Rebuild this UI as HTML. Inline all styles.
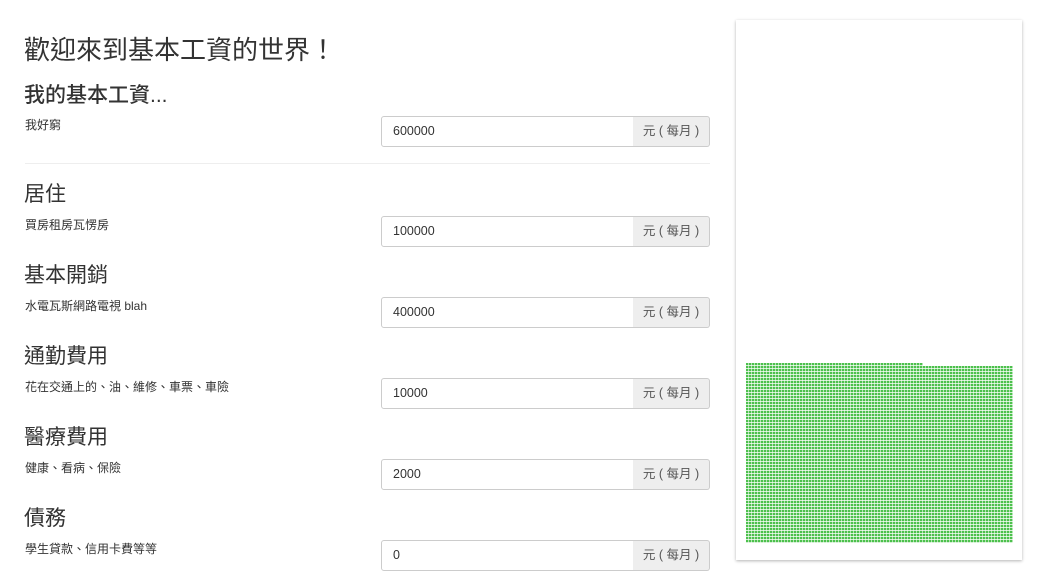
<!DOCTYPE html>
<html><head><meta charset="utf-8"><style>
body{margin:0;width:1050px;height:577px;background:#fff;font-family:"Liberation Sans","Noto Sans CJK TC",sans-serif;color:#333;position:relative;overflow:hidden}
.a{position:absolute;white-space:nowrap}
h1{position:absolute;left:24px;top:32px;margin:0;font-size:26px;font-weight:normal;line-height:36px}
.h{font-size:21px;line-height:28px}
.d{font-size:12px;line-height:16px}
.inp{position:absolute;left:381px;height:29px;border:1px solid #ccc;border-radius:3px 0 0 3px;font-size:12.5px;line-height:29px;padding-left:11px;width:240px}
.ad{position:absolute;left:633px;width:76px;height:29px;border:1px solid #ccc;border-left:none;background:#eee;border-radius:0 3px 3px 0;font-size:12.5px;line-height:29px;text-align:center;color:#555}
.card{position:absolute;left:736px;top:20px;width:286px;height:540px;background:#fff;box-shadow:0 1px 3px rgba(0,0,0,.3)}
.g{position:absolute;background-color:#fff;background-image:repeating-linear-gradient(0deg,rgba(255,255,255,.75) 0 1px,rgba(255,255,255,0) 1px 3px),repeating-linear-gradient(90deg,#4cc04c 0 2px,#b0e4b0 2px 3px)}
</style></head><body>
<h1>歡迎來到基本工資的世界！</h1>
<div class="a" style="left:24px;top:82px;font-size:21px;line-height:28px;font-weight:500">我的基本工資...</div>
<div class="a d" style="left:25px;top:117px">我好窮</div>
<div class="inp" style="top:116px">600000</div><div class="ad" style="top:116px">元 ( 每月 )</div>
<div class="a" style="left:25px;top:163px;width:685px;height:1px;background:#eee"></div>

<div class="a h" style="left:24px;top:181px">居住</div>
<div class="a d" style="left:25px;top:217px">買房租房瓦愣房</div>
<div class="inp" style="top:216px">100000</div><div class="ad" style="top:216px">元 ( 每月 )</div>

<div class="a h" style="left:24px;top:262px">基本開銷</div>
<div class="a d" style="left:25px;top:298px">水電瓦斯網路電視 blah</div>
<div class="inp" style="top:297px">400000</div><div class="ad" style="top:297px">元 ( 每月 )</div>

<div class="a h" style="left:24px;top:343px">通勤費用</div>
<div class="a d" style="left:25px;top:379px">花在交通上的、油、維修、車票、車險</div>
<div class="inp" style="top:378px">10000</div><div class="ad" style="top:378px">元 ( 每月 )</div>

<div class="a h" style="left:24px;top:424px">醫療費用</div>
<div class="a d" style="left:25px;top:460px">健康、看病、保險</div>
<div class="inp" style="top:459px">2000</div><div class="ad" style="top:459px">元 ( 每月 )</div>

<div class="a h" style="left:24px;top:505px">債務</div>
<div class="a d" style="left:25px;top:541px">學生貸款、信用卡費等等</div>
<div class="inp" style="top:540px">0</div><div class="ad" style="top:540px">元 ( 每月 )</div>

<div class="card"></div>
<div class="g" style="left:746px;top:363px;width:177px;height:180px"></div>
<div class="g" style="left:923px;top:366px;width:90px;height:177px"></div>
</body></html>
